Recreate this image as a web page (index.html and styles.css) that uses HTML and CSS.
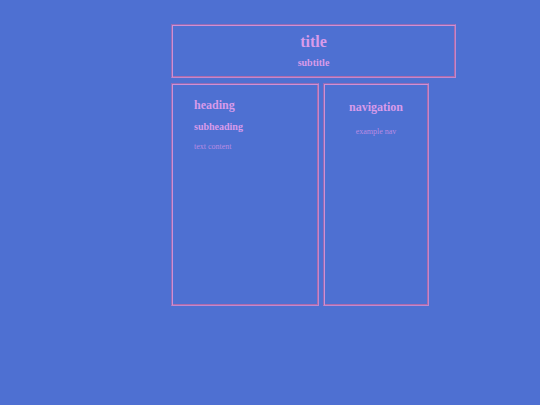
FILE: index.html
```html
<!DOCTYPE html>
<html lang="en">
<head>
  <meta charset="UTF-8" />
  <meta name="viewport" content="width=device-width, initial-scale=1.0" />
  <title>title</title>
  <link rel="stylesheet" href="styles.css">
</head>
<body>
  <div class="container">
    <header class="box">
      <h1>title</h1>
      <h3>subtitle</h3>
    </header>
    <div class="columns">
      <main class="box">
        <h2>heading</h2>
        <h3>subheading</h3>
        <p>text content</p>
      </main>
      <nav class="box">
        <h2>navigation</h2>
        <p>example nav</p>
      </nav>
    </div>
  </div>
</body>
</html>
```

FILE: styles.css
```css
* {
  box-sizing: border-box;
}
body {
  margin: 0;
  background: #4e70d2;
  color: #d89bea;
  font-family: Georgia, 'Liberation Serif', serif;
}
.container {
  margin: 24px 84px 24px 171px;
}
/* two-tone groove frame */
.box {
  border: 1px solid;
  border-color: #946cb6 #c088d0 #c088d0 #946cb6;
  box-shadow: inset 1px 1px #d08fd4, inset -1px -1px #ae6cac;
}
h1, h2, h3, p {
  margin: 0;
}
h1 {
  font-size: 16px;
  line-height: 20px;
}
h2 {
  font-size: 12px;
  line-height: 16px;
}
h3 {
  font-size: 10px;
  line-height: 12px;
}
p {
  font-size: 8px;
  line-height: 12px;
  color: #b98be3;
}
header {
  padding: 7px 0 8px;
  text-align: center;
}
header h3 {
  margin-top: 5px;
}
.columns {
  display: grid;
  grid-template-columns: 148fr 106fr;
  gap: 4px;
  margin-top: 5px;
  padding-right: 27px;
}
.columns .box {
  min-height: 223px;
}
main {
  padding: 13px 22px;
}
main h3 {
  margin-top: 8px;
}
main p {
  margin-top: 8px;
}
nav {
  padding-top: 15px;
  text-align: center;
}
nav p {
  margin-top: 11px;
}
```
